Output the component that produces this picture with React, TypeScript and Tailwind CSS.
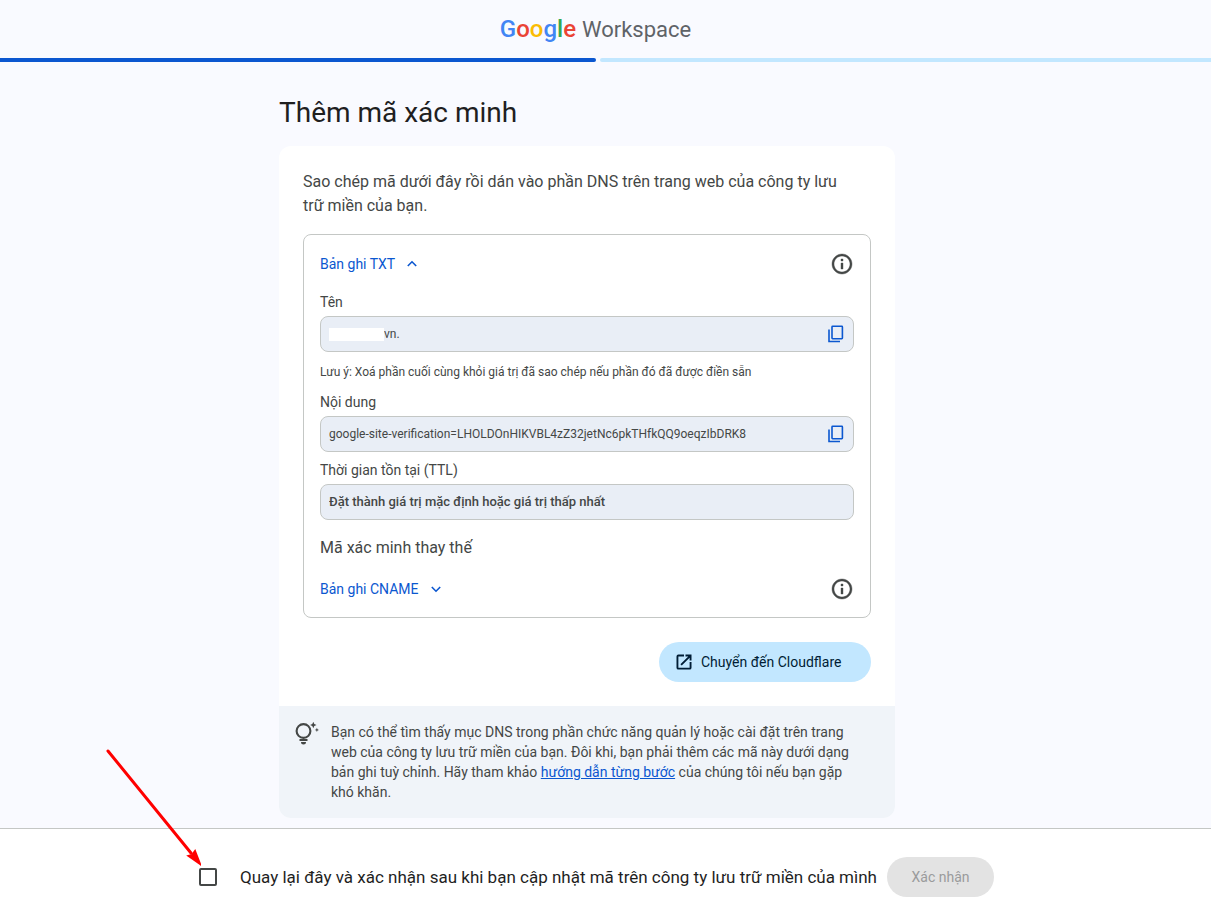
import { useState } from "react";
import clsx from "clsx";

function InfoIcon() {
  return (
    <svg viewBox="0 0 24 24" className="size-6" fill="currentColor" stroke="currentColor" strokeWidth="0.4" aria-hidden="true">
      <path d="M11 7h2v2h-2zm0 4h2v6h-2zm1-9C6.480 2 2 6.480 2 12s4.480 10 10 10 10-4.480 10-10S17.520 2 12 2zm0 18c-4.410 0-8-3.590-8-8s3.590-8 8-8 8 3.590 8 8-3.590 8-8 8z" />
    </svg>
  );
}

function CopyIcon() {
  return (
    <svg viewBox="0 0 20 20" className="size-5" fill="none" stroke="currentColor" strokeWidth="1.6" aria-hidden="true">
      <rect x="7" y="2.300" width="10.400" height="12.400" rx="0.600" />
      <path d="M4 5.500v12H15" />
    </svg>
  );
}

function Chevron({ open }: { open: boolean }) {
  return (
    <svg viewBox="0 0 18 18" className={clsx("size-[18px]", open && "rotate-180")} fill="none" stroke="currentColor" strokeWidth="1.6" aria-hidden="true">
      <path d="M4.800 7 9 11.200 13.200 7" />
    </svg>
  );
}

function OpenIcon() {
  return (
    <svg viewBox="0 0 24 24" className="size-[18px]" fill="currentColor" aria-hidden="true">
      <path d="M19.500 19.500h-15v-15H12V2H4.500A2.500 2.500 0 0 0 2 4.500v15A2.500 2.500 0 0 0 4.500 22h15a2.500 2.500 0 0 0 2.500-2.500V12h-2.500zM14 2v2.500h3.700L7.200 15l1.800 1.800L19.500 6.300V10H22V2z" />
    </svg>
  );
}

function BulbIcon() {
  return (
    <svg viewBox="0 0 24 24" className="size-6 shrink-0" aria-hidden="true">
      <circle cx="8.500" cy="9" r="6.900" fill="none" stroke="currentColor" strokeWidth="2.100" />
      <path d="M4.500 17h8v2h-8zM6 20h5a2.500 2.500 0 0 1-5 0z" fill="currentColor" />
      <path d="M18.300-.2l1 2.200 2.200 1-2.200 1-1 2.200-1-2.200-2.200-1 2.200-1zM21.900 5.800l.6 1.500 1.500.6-1.500.6-.6 1.500-.6-1.500-1.500-.6 1.500-.6z" fill="currentColor" />
    </svg>
  );
}

interface RecordFieldProps {
  id: string;
  label: string;
  value: string;
  masked?: boolean;
  bold?: boolean;
  copyable?: boolean;
}

function RecordField({ id, label, value, masked, bold, copyable }: RecordFieldProps) {
  return (
    <div>
      <label htmlFor={id} className="mb-1 block text-sm">{label}</label>
      <div className="flex h-9 items-center rounded-lg border border-[#c4c7c5] bg-[#e9eef6] px-2">
        {masked && <span className="h-[13px] w-[55px] shrink-0 bg-white" />}
        <input
          id={id}
          readOnly
          value={value}
          className={clsx("min-w-0 flex-1 bg-transparent outline-none", bold ? "text-[13px] font-medium" : "text-xs")}
        />
        {copyable && (
          <button type="button" aria-label="Sao chép" className="text-[#0b57d0]">
            <CopyIcon />
          </button>
        )}
      </div>
    </div>
  );
}

function RecordHeader({ title, open, onToggle }: { title: string; open: boolean; onToggle?: () => void }) {
  return (
    <div className="flex h-[57px] items-center justify-between">
      <button type="button" onClick={onToggle} className="flex items-center gap-2 text-sm text-[#0b57d0]">
        {title}
        <Chevron open={open} />
      </button>
      <button type="button" aria-label="Thông tin">
        <InfoIcon />
      </button>
    </div>
  );
}

export default function App() {
  const [checked, setChecked] = useState(false);

  return (
    <div className="flex min-h-screen flex-col bg-[#f9faff] font-[Roboto,'Noto_Sans',sans-serif] text-[#444746]">
      <header>
        <div className="flex h-[58px] items-center justify-center pr-5">
          <div className="flex items-baseline gap-1.5">
            <span className="text-2xl font-medium">
              <span className="text-[#4285f4]">G</span>
              <span className="text-[#ea4335]">o</span>
              <span className="text-[#fbbc04]">o</span>
              <span className="text-[#4285f4]">g</span>
              <span className="text-[#34a853]">l</span>
              <span className="text-[#ea4335]">e</span>
            </span>
            <span className="text-[22px] text-[#5f6368]">Workspace</span>
          </div>
        </div>
        <div className="flex h-1 gap-1">
          <div className="w-[49.2%] rounded-r-sm bg-[#0b57d0]" />
          <div className="flex-1 rounded-l-sm bg-[#c2e7ff]" />
        </div>
      </header>

      <main className="flex-1 pr-[37px] pb-2.5">
        <div className="mx-auto max-w-[616px]">
          <h1 className="pt-8 pb-3.5 text-[28px] leading-[38px] text-[#1f1f1f]">Thêm mã xác minh</h1>
          <section className="overflow-hidden rounded-xl bg-white">
            <div className="p-6">
              <p className="pr-4 text-base">
                Sao chép mã dưới đây rồi dán vào phần DNS trên trang web của công ty lưu trữ miền của bạn.
              </p>
              <div className="mt-4 rounded-lg border border-[#c4c7c5] px-4">
                <RecordHeader title="Bản ghi TXT" open />
                <RecordField id="name" label="Tên" value="vn." masked copyable />
                <p className="my-2.5 text-xs leading-5">
                  Lưu ý: Xoá phần cuối cùng khỏi giá trị đã sao chép nếu phần đó đã được điền sẵn
                </p>
                <div className="space-y-2">
                  <RecordField
                    id="content"
                    label="Nội dung"
                    value="google-site-verification=LHOLDOnHIKVBL4zZ32jetNc6pkTHfkQQ9oeqzIbDRK8"
                    copyable
                  />
                  <RecordField id="ttl" label="Thời gian tồn tại (TTL)" value="Đặt thành giá trị mặc định hoặc giá trị thấp nhất" bold />
                </div>
                <h2 className="mt-4 text-base">Mã xác minh thay thế</h2>
                <RecordHeader title="Bản ghi CNAME" open={false} />
              </div>
              <div className="mt-6 flex justify-end">
                <button type="button" className="flex h-10 w-[212px] items-center gap-2 rounded-full bg-[#c2e7ff] px-4 text-sm text-[#001d35]">
                  <OpenIcon />
                  Chuyển đến Cloudflare
                </button>
              </div>
            </div>
            <div className="flex gap-3 bg-[#f0f4f9] p-4">
              <BulbIcon />
              <p className="pr-5 text-sm">
                Bạn có thể tìm thấy mục DNS trong phần chức năng quản lý hoặc cài đặt trên trang web của công ty lưu trữ miền của bạn. Đôi khi, bạn phải thêm các mã này dưới dạng bản ghi tuỳ chỉnh. Hãy tham khảo{" "}
                <a href="#" className="text-[#0b57d0] underline">hướng dẫn từng bước</a> của chúng tôi nếu bạn gặp khó khăn.
              </p>
            </div>
          </section>
        </div>
      </main>

      <footer className="flex items-center justify-center gap-2.5 border-t border-[#c4c7c5] bg-white pt-7 pr-[18px] pb-3.5">
        <div className="flex items-center text-[17px] leading-6 text-[#1f1f1f]">
          <div className="relative mr-[23px] flex">
            <input
              id="confirm"
              type="checkbox"
              checked={checked}
              onChange={(e) => setChecked(e.target.checked)}
              className="size-[18px] appearance-none rounded-xs border-2 border-[#444746] checked:bg-[#0b57d0]"
            />
            <svg viewBox="0 0 96 118" className="pointer-events-none absolute right-4 bottom-5 h-[118px] w-24 max-w-none" aria-hidden="true">
              <path d="M3 3 86 105" stroke="#f00" strokeWidth="3" strokeLinecap="round" />
              <path d="M95 116 83.500 108 87 107 90 103z" fill="#f00" stroke="#f00" strokeWidth="2" />
            </svg>
          </div>
          <label htmlFor="confirm">Quay lại đây và xác nhận sau khi bạn cập nhật mã trên công ty lưu trữ miền của mình</label>
        </div>
        <button type="button" disabled className="h-10 w-[107px] shrink-0 rounded-full bg-[#e3e3e3] text-sm text-[#9a9b9c]">
          Xác nhận
        </button>
      </footer>
    </div>
  );
}
